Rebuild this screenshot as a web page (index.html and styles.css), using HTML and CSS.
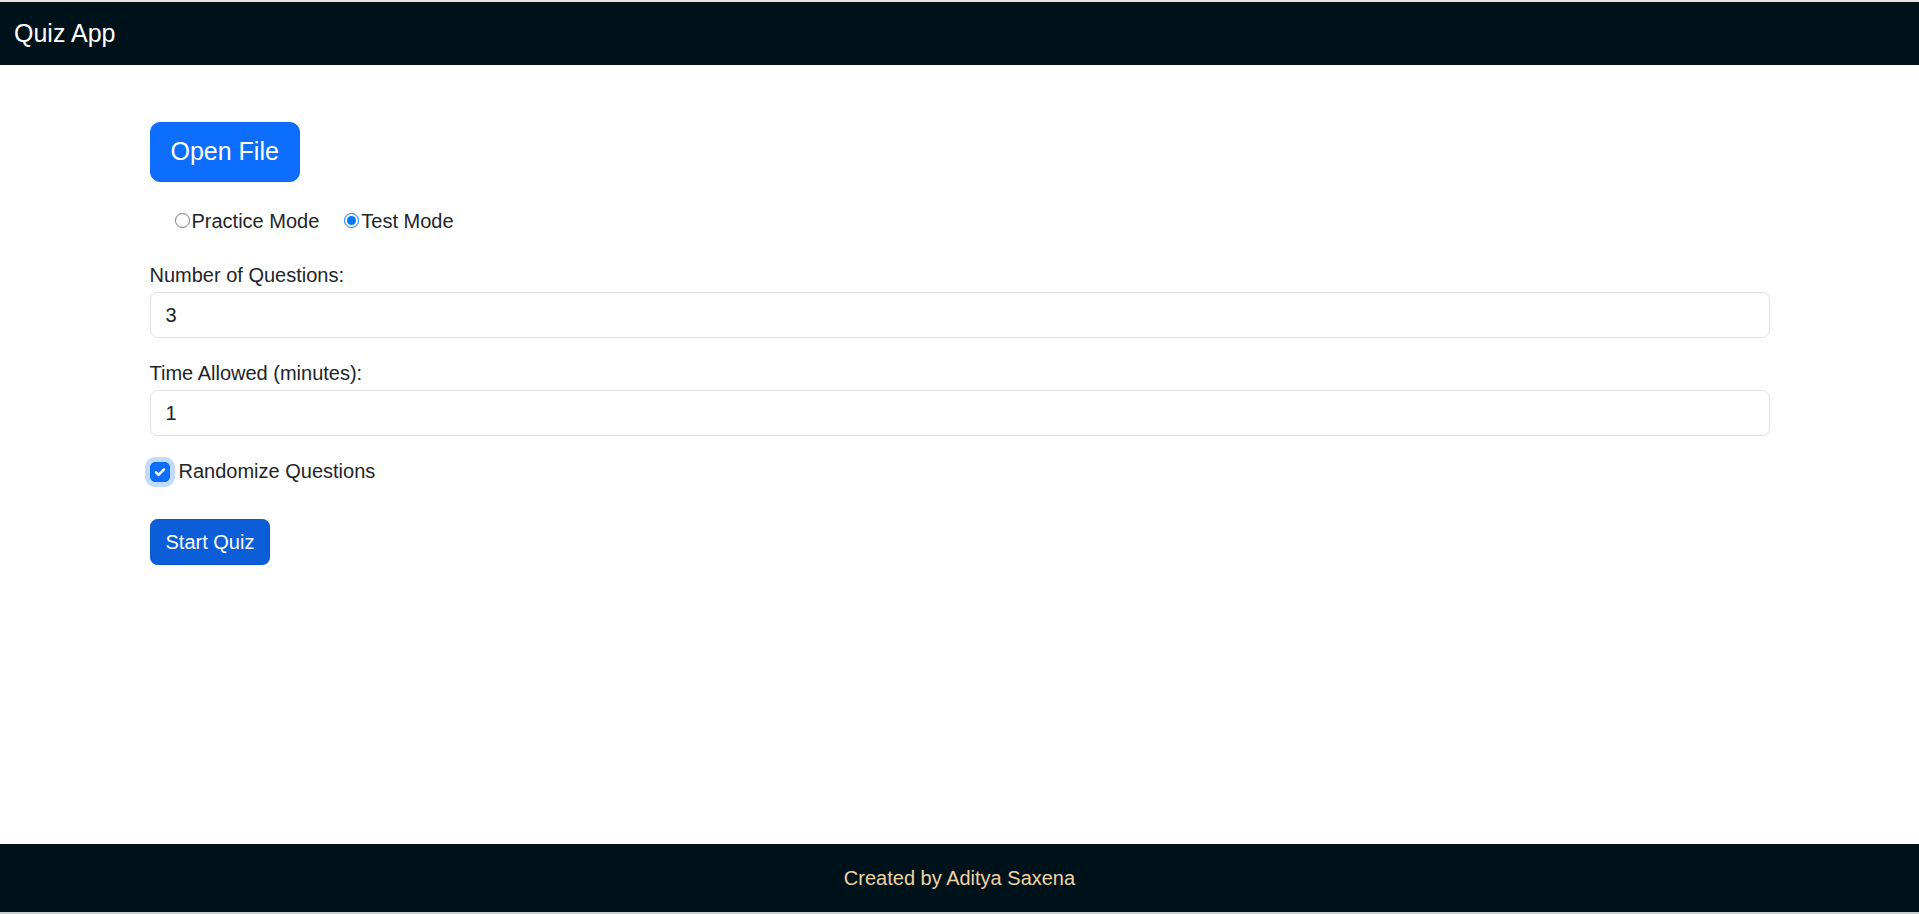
FILE: index.html
```html
<!DOCTYPE html>
<html lang="en">
<head>
<meta charset="utf-8">
<title>Quiz App</title>
<link rel="stylesheet" href="styles.css">
</head>
<body>
<div class="app">
  <header class="navbar">
    <span class="brand">Quiz App</span>
  </header>
  <main class="main">
    <div class="container">
      <button class="btn btn-lg btn-primary" type="button">Open File</button>
      <div class="modes">
        <label class="mode"><input type="radio" name="mode" class="radio">Practice Mode</label>
        <label class="mode"><input type="radio" name="mode" class="radio" checked>Test Mode</label>
      </div>
      <div class="field">
        <label class="field-label" for="num">Number of Questions:</label>
        <input id="num" class="form-control" type="number" value="3">
      </div>
      <div class="field">
        <label class="field-label" for="time">Time Allowed (minutes):</label>
        <input id="time" class="form-control" type="number" value="1">
      </div>
      <label class="check-row">
        <span class="check-wrap">
          <input type="checkbox" class="check-input" checked>
          <svg class="check-mark" viewBox="0 0 20 20" width="20" height="20" aria-hidden="true"><path d="M6 10.3l2.6 2.6L14 7.4" fill="none" stroke="#fff" stroke-width="2.4" stroke-linecap="round" stroke-linejoin="round"/></svg>
        </span>
        <span>Randomize Questions</span>
      </label>
      <button class="btn btn-start" type="button">Start Quiz</button>
    </div>
  </main>
  <footer class="footer">Created by Aditya Saxena</footer>
</div>
</body>
</html>
```
FILE: styles.css
```css
* { box-sizing: border-box; }
html, body { margin: 0; padding: 0; height: 100%; }
body {
  font-family: "Liberation Sans", Arial, sans-serif;
  font-size: 20px;
  line-height: 1.5;
  color: #212529;
  background: #fff;
}
.app {
  height: 914px;
  display: flex;
  flex-direction: column;
  border-top: 2px solid #e3e3e3;
  border-bottom: 2px solid #c9ced1;
}
.navbar {
  height: 63px;
  flex: none;
  background: #001219;
  display: flex;
  align-items: center;
  padding-left: 14px;
}
.brand {
  color: #fff;
  font-size: 25px;
  line-height: normal;
}
.main { flex: 1; }
.container {
  width: 1620px;
  margin: 0 auto;
  padding-top: 57px;
  display: flex;
  flex-direction: column;
  align-items: flex-start;
}
.btn {
  font-family: inherit;
  border: 1px solid transparent;
  color: #fff;
  cursor: pointer;
}
.btn-lg {
  font-size: 25px;
  line-height: 1.5;
  padding: 10px 20px;
  border-radius: 10px;
  height: 60px;
}
.btn-primary { background: #0d6efd; border-color: #0d6efd; }
.btn-start {
  background: #0b5ed7;
  border-color: #0a58ca;
  font-size: 20px;
  line-height: 30px;
  padding: 7px 15px;
  border-radius: 7.5px;
  height: 46px;
  margin-top: 33px;
}
.modes {
  display: flex;
  align-items: center;
  margin-top: 24px;
  padding-left: 25px;
  gap: 25px;
  height: 30px;
}
.mode { display: flex; align-items: center; }
.radio {
  width: 15px;
  height: 15px;
  margin: 0 2px 1px 0;
}
.field {
  width: 100%;
  display: flex;
  flex-direction: column;
  gap: 2px;
}
.modes + .field { margin-top: 24px; }
.field + .field { margin-top: 20px; }
.field-label { display: block; }
.form-control {
  width: 100%;
  height: 46px;
  font-family: inherit;
  font-size: 20px;
  line-height: 30px;
  color: #212529;
  padding: 7px 15px;
  border: 1px solid #dee2e6;
  border-radius: 7.5px;
  background: #fff;
  -moz-appearance: textfield;
}
.form-control::-webkit-outer-spin-button,
.form-control::-webkit-inner-spin-button { -webkit-appearance: none; margin: 0; }
.check-row {
  display: flex;
  align-items: center;
  gap: 9px;
  margin-top: 20px;
  height: 30px;
}
.check-wrap {
  position: relative;
  width: 20px;
  height: 20px;
  display: block;
  margin-top: 1px;
}
.check-input {
  -webkit-appearance: none;
  appearance: none;
  margin: 0;
  width: 20px;
  height: 20px;
  border-radius: 5px;
  background: #0d6efd;
  border: 1px solid #0d6efd;
  box-shadow: 0 0 0 5px rgba(13, 110, 253, 0.25);
  display: block;
}
.check-mark {
  position: absolute;
  left: 0;
  top: 0;
  pointer-events: none;
}
.footer {
  height: 68px;
  flex: none;
  background: #001219;
  color: #eed3a3;
  display: flex;
  align-items: center;
  justify-content: center;
  font-size: 20px;
}
```
